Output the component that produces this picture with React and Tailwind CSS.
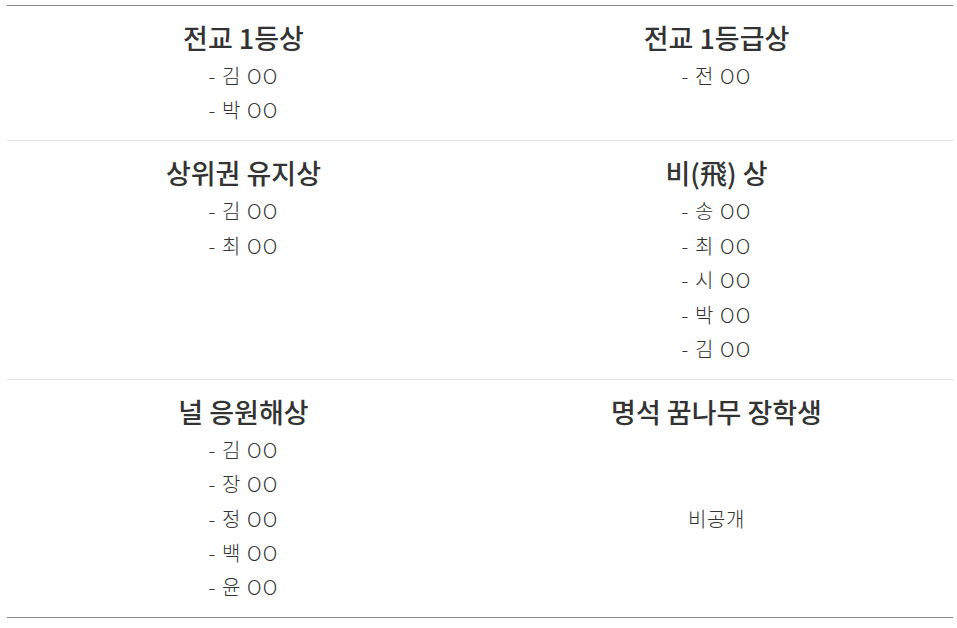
const awards = [
  [
    { title: '전교 1등상', names: ['김 OO', '박 OO'] },
    { title: '전교 1등급상', names: ['전 OO'] },
  ],
  [
    { title: '상위권 유지상', names: ['김 OO', '최 OO'] },
    { title: '비(飛) 상', names: ['송 OO', '최 OO', '시 OO', '박 OO', '김 OO'] },
  ],
  [
    { title: '널 응원해상', names: ['김 OO', '장 OO', '정 OO', '백 OO', '윤 OO'] },
    { title: '명석 꿈나무 장학생', secret: true },
  ],
];

function AwardCell({ award }) {
  return (
    <div className="flex flex-col items-center pt-[16px] pb-[12.5px]">
      <h3 className="text-[27px] leading-[32px] font-medium text-[#333] mb-[5px]">{award.title}</h3>
      {award.secret ? (
        <div className="text-[20px] leading-[34.4px] font-light text-[#333] mt-[68.8px] tracking-[0.6px]">비공개</div>
      ) : (
        award.names.map((name, i) => (
          <div key={i} className="text-[20px] leading-[34.4px] font-light text-[#333] tracking-[1.2px] whitespace-pre">
            {'- ' + name}
          </div>
        ))
      )}
    </div>
  );
}

export default function App() {
  return (
    <div className="bg-white min-h-screen pt-[5px] px-[7px] pr-[4px]" style={{ fontFamily: '"Noto Sans CJK KR", "Noto Sans", sans-serif' }}>
      <div className="border-t border-b border-[#888]">
        {awards.map((row, i) => (
          <div
            key={i}
            className={`grid grid-cols-2 ${i < awards.length - 1 ? 'border-b border-[#e2e2e2]' : ''}`}
          >
            {row.map((award, j) => (
              <AwardCell key={j} award={award} />
            ))}
          </div>
        ))}
      </div>
    </div>
  );
}
